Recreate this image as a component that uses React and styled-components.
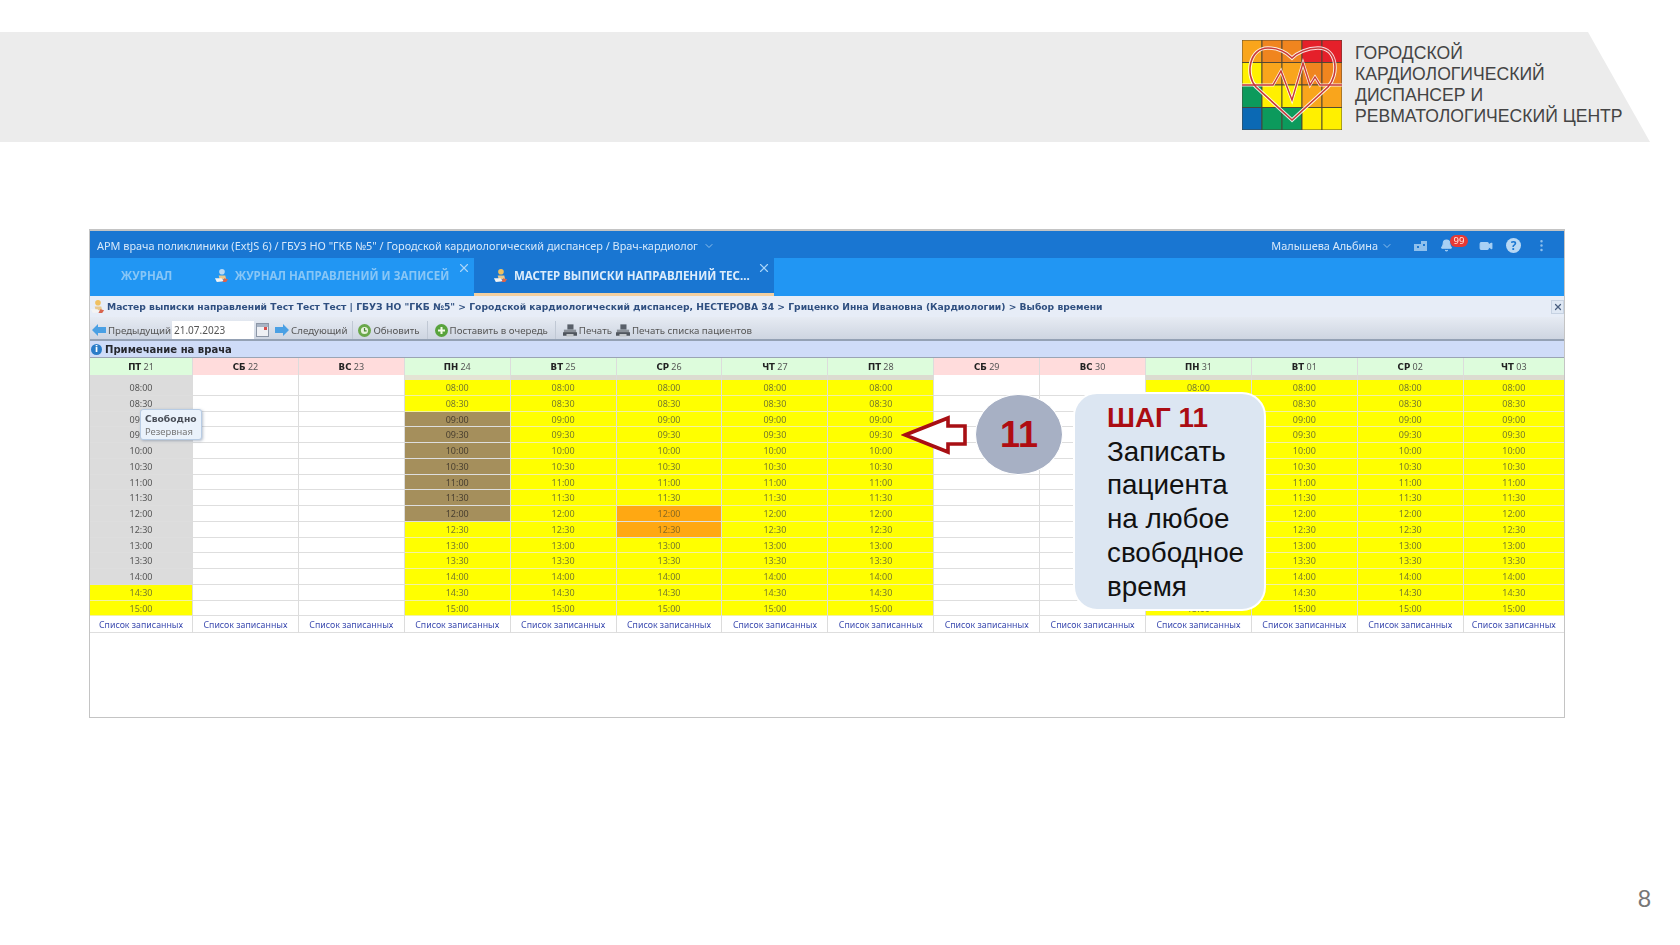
import styled, { createGlobalStyle } from "styled-components";
import { X, ChevronDown, Bell, Video, EllipsisVertical } from "lucide-react";

const GlobalStyle = createGlobalStyle`
  html, body {
    margin: 0;
    padding: 0;
    background: #fff;
  }
`;

const SLOTS = [
  "08:00", "08:30", "09:00", "09:30", "10:00", "10:30", "11:00", "11:30",
  "12:00", "12:30", "13:00", "13:30", "14:00", "14:30", "15:00",
];

const DAYS = [
  { name: "ПТ", num: "21", strip: "#dcdcdc", tone: (i) => (i < 13 ? "off" : "free") },
  { name: "СБ", num: "22", weekend: true },
  { name: "ВС", num: "23", weekend: true },
  { name: "ПН", num: "24", strip: "#e4e4d4", tone: (i) => (i >= 2 && i <= 8 ? "busy" : "free") },
  { name: "ВТ", num: "25", strip: "#dcdcd0", tone: () => "free" },
  { name: "СР", num: "26", strip: "#dcdcd0", tone: (i) => (i === 8 || i === 9 ? "queue" : "free") },
  { name: "ЧТ", num: "27", strip: "#dcdcd0", tone: () => "free" },
  { name: "ПТ", num: "28", strip: "#dcdcd0", tone: () => "free" },
  { name: "СБ", num: "29", weekend: true },
  { name: "ВС", num: "30", weekend: true },
  { name: "ПН", num: "31", strip: "#dcdcd0", tone: () => "free" },
  { name: "ВТ", num: "01", strip: "#dcdcd0", tone: () => "free" },
  { name: "СР", num: "02", strip: "#dcdcd0", tone: () => "free" },
  { name: "ЧТ", num: "03", strip: "#dcdcd0", tone: () => "free" },
];

const LOGO_COLORS = [
  ["#f9a51c", "#f0851f", "#f0851f", "#e5202a", "#e5202a"],
  ["#fff000", "#f9a51c", "#f9a51c", "#f0851f", "#f0851f"],
  ["#0c9a5c", "#fff000", "#fff000", "#f9a51c", "#f9a51c"],
  ["#0b69b4", "#0c9a5c", "#0c9a5c", "#fff000", "#fff000"],
];

function Logo() {
  const heart = "M50 80 L14 47 C3 35 7 8 26 8 C37 8 45 13 50 18 C55 13 65 8 76 8 C96 8 97 35 86 47 Z";
  const pulse = "M0 45 L31 45 L39 31 L50 60 L61 23 L68 45 L73 37 L78 45 L100 45";
  return (
    <LogoSvg viewBox="0 0 100 90">
      {LOGO_COLORS.map((row, y) =>
        row.map((color, x) => (
          <rect key={`${x}-${y}`} x={x * 20} y={y * 22.5} width="20" height="22.5" fill={color} stroke="#4a4434" strokeWidth="0.9" />
        ))
      )}
      <path d={heart} fill="none" stroke="#fff" strokeWidth="3.6" opacity="0.85" />
      <path d={pulse} fill="none" stroke="#fff" strokeWidth="3" opacity="0.85" />
      <path d={heart} fill="none" stroke="#c8383a" strokeWidth="1.6" />
      <path d={pulse} fill="none" stroke="#c8383a" strokeWidth="1.4" />
    </LogoSvg>
  );
}

function PersonIcon({ head = "#f0c060" }) {
  return (
    <svg width="15" height="15" viewBox="0 0 16 16">
      <circle cx="8.5" cy="4" r="3" fill={head} />
      <path d="M5 8 L12 8 L13 12 L6 12 Z" fill="#e9c88c" />
      <path d="M1 11 L8 11 L11 14 L3 15 Z" fill="#f4f4f4" />
      <path d="M11 11 L15 12 L13 15 L9 15 Z" fill="#d8644e" />
    </svg>
  );
}

function ArrowIcon({ left }) {
  return (
    <svg width="14" height="12" viewBox="0 0 14 12">
      <path d={left ? "M0 6 L6 0 L6 3 L14 3 L14 9 L6 9 L6 12 Z" : "M14 6 L8 0 L8 3 L0 3 L0 9 L8 9 L8 12 Z"} fill="#4aa0e4" />
    </svg>
  );
}

function RefreshIcon() {
  return (
    <svg width="13" height="13" viewBox="0 0 13 13">
      <circle cx="6.5" cy="6.5" r="6.5" fill="#6aa84a" />
      <circle cx="6.5" cy="6.5" r="3.6" fill="#e8f2dc" />
      <path d="M6.5 4 V6.8 H8.6" fill="none" stroke="#4a8a34" strokeWidth="1.2" />
    </svg>
  );
}

function AddIcon() {
  return (
    <svg width="13" height="13" viewBox="0 0 13 13">
      <circle cx="6.5" cy="6.5" r="6.5" fill="#58a33c" />
      <path d="M6.5 3 V10 M3 6.5 H10" stroke="#f4fbe8" strokeWidth="2" />
    </svg>
  );
}

function PrintIcon() {
  return (
    <svg width="14" height="13" viewBox="0 0 16 14">
      <path d="M5 0 H12 V6 H5 Z" fill="#59606a" />
      <path d="M1 6 H15 V12 H1 Z" fill="#8a9098" />
      <path d="M0 9 H16 V13 H0 Z" fill="#50565e" />
      <path d="M4 11 H12 V14 H4 Z" fill="#c4c8cc" />
    </svg>
  );
}

function CalendarIcon() {
  return (
    <svg width="13" height="14" viewBox="0 0 13 14">
      <rect x="0.5" y="0.5" width="12" height="13" fill="#eef0f4" stroke="#8c96a6" />
      <rect x="1" y="1" width="11" height="3" fill="#a8b4c4" />
      <rect x="8" y="4" width="3" height="3" fill="#d8504e" />
    </svg>
  );
}

function RedArrow() {
  return (
    <ArrowSvg width="68" height="42" viewBox="0 0 68 42">
      <path d="M4 20 L47 3 L47 11 L64 11 L64 29 L47 29 L47 37 Z" fill="#fff" stroke="#a80f14" strokeWidth="3.6" />
    </ArrowSvg>
  );
}

function DayColumn({ day }) {
  return (
    <Column>
      <DayHead $weekend={day.weekend}>
        <b>{day.name}</b> {day.num}
      </DayHead>
      <Strip $color={day.strip} />
      {SLOTS.map((slot, i) => {
        const tone = day.tone ? day.tone(i) : "empty";
        return <Slot key={slot} $tone={tone}>{day.tone ? slot : ""}</Slot>;
      })}
      <ListLink>Список записанных</ListLink>
    </Column>
  );
}

export default function App() {
  return (
    <Page>
      <GlobalStyle />
      <Band>
        <Logo />
        <Org>
          ГОРОДСКОЙ<br />
          КАРДИОЛОГИЧЕСКИЙ<br />
          ДИСПАНСЕР И<br />
          РЕВМАТОЛОГИЧЕСКИЙ ЦЕНТР
        </Org>
      </Band>

      <Window>
        <TopBar>
          <AppTitle>
            АРМ врача поликлиники (ExtJS 6) / ГБУЗ НО "ГКБ №5" / Городской кардиологический диспансер / Врач-кардиолог
            <ChevronDown size={12} />
          </AppTitle>
          <UserArea>
            <UserName>
              Малышева Альбина
              <ChevronDown size={12} />
            </UserName>
            <TopIcon $left={21}>
              <svg width="13" height="11" viewBox="0 0 13 11">
                <path d="M0 4 H7 V1 H13 V11 H0 Z" fill="#8fc0ec" />
                <rect x="3" y="6" width="2" height="2" fill="#1976d2" />
                <rect x="9" y="4" width="2" height="2" fill="#1976d2" />
              </svg>
            </TopIcon>
            <TopIcon $left={13}>
              <Bell size={13} fill="#a8d0f4" stroke="#a8d0f4" />
              <Badge>99</Badge>
            </TopIcon>
            <TopIcon $left={26}>
              <Video size={14} fill="#a8d0f4" stroke="#a8d0f4" />
            </TopIcon>
            <HelpDot>?</HelpDot>
            <TopIcon $left={13}>
              <EllipsisVertical size={15} stroke="#8fc0ec" />
            </TopIcon>
          </UserArea>
        </TopBar>

        <TabBar>
          <Tab $width={113}>ЖУРНАЛ</Tab>
          <Tab $width={271} $padRight={14}>
            <PersonIcon head="#b8d8f4" />
            ЖУРНАЛ НАПРАВЛЕНИЙ И ЗАПИСЕЙ
            <TabClose><X size={14} /></TabClose>
          </Tab>
          <Tab $width={300} $active>
            <PersonIcon />
            МАСТЕР ВЫПИСКИ НАПРАВЛЕНИЙ ТЕС...
            <TabClose><X size={14} /></TabClose>
          </Tab>
        </TabBar>

        <Crumbs>
          <PersonIcon />
          <CrumbText>
            Мастер выписки направлений Тест Тест Тест | ГБУЗ НО "ГКБ №5" &gt; Городской кардиологический диспансер, НЕСТЕРОВА 34 &gt; Гриценко Инна Ивановна (Кардиологии) &gt; Выбор времени
          </CrumbText>
          <CrumbClose><X size={10} strokeWidth={3} /></CrumbClose>
        </Crumbs>

        <Toolbar>
          <ToolButton><ArrowIcon left />Предыдущий</ToolButton>
          <DateField>21.07.2023</DateField>
          <CalendarIcon />
          <ToolButton $gap={6}><ArrowIcon />Следующий</ToolButton>
          <Divider $space={5} />
          <ToolButton><RefreshIcon />Обновить</ToolButton>
          <Divider $space={7} />
          <ToolButton><AddIcon />Поставить в очередь</ToolButton>
          <Divider $space={7} />
          <ToolButton><PrintIcon />Печать</ToolButton>
          <ToolButton $gap={4}><PrintIcon />Печать списка пациентов</ToolButton>
        </Toolbar>

        <NoteBar>
          <InfoDot>i</InfoDot>
          Примечание на врача
        </NoteBar>

        <Schedule>
          {DAYS.map((day) => (
            <DayColumn key={day.name + day.num} day={day} />
          ))}
          <Tip>
            <b>Свободно</b>
            <span>Резервная</span>
          </Tip>
        </Schedule>
      </Window>

      <RedArrow />
      <StepBadge>11</StepBadge>
      <Callout>
        <strong>ШАГ 11</strong>
        Записать<br />
        пациента<br />
        на любое<br />
        свободное<br />
        время
      </Callout>

      <PageNumber>8</PageNumber>
    </Page>
  );
}

const Page = styled.div`
  position: relative;
  width: 1680px;
  height: 945px;
  overflow: hidden;
  display: flex;
  flex-direction: column;
  background: #fff;
  font-family: "Liberation Sans", Arial, sans-serif;
`;

const Band = styled.div`
  margin-top: 32px;
  width: 1650px;
  height: 110px;
  box-sizing: border-box;
  padding: 8px 0 0 1242px;
  display: flex;
  align-items: flex-start;
  gap: 13px;
  background: #ececec;
  clip-path: polygon(0 0, 1588px 0, 100% 100%, 0 100%);
`;

const LogoSvg = styled.svg`
  width: 100px;
  height: 90px;
  flex: none;
`;

const Org = styled.div`
  margin-top: 3px;
  font-size: 17.6px;
  line-height: 21.1px;
  color: #444;
  white-space: nowrap;
`;

const Window = styled.div`
  margin: 87px 0 0 89px;
  width: 1476px;
  height: 489px;
  box-sizing: border-box;
  border: 1px solid #c4c4c4;
  border-top-width: 2px;
  background: #fff;
  font-family: "Noto Sans", sans-serif;
  filter: blur(0.4px);
`;

const TopBar = styled.div`
  height: 27px;
  box-sizing: border-box;
  padding: 2px 15px 0 7px;
  display: flex;
  align-items: center;
  justify-content: space-between;
  background: #1976d2;
`;

const AppTitle = styled.div`
  display: flex;
  align-items: center;
  gap: 5px;
  font-size: 10.9px;
  color: #d6e8fa;
  white-space: nowrap;

  svg {
    color: #8fc0ec;
  }
`;

const UserName = styled(AppTitle)`
  gap: 3px;
`;

const UserArea = styled.div`
  display: flex;
  align-items: center;
`;

const TopIcon = styled.div`
  position: relative;
  margin-left: ${(p) => p.$left}px;
  display: flex;
  align-items: center;
`;

const Badge = styled.span`
  position: absolute;
  left: 10px;
  top: -4px;
  width: 18px;
  height: 12px;
  border-radius: 6px;
  background: #e53935;
  color: #ffe9e0;
  font-size: 9.5px;
  line-height: 12px;
  text-align: center;
`;

const HelpDot = styled.span`
  margin-left: 13px;
  width: 15px;
  height: 15px;
  border-radius: 50%;
  background: #b8d8f4;
  color: #1976d2;
  font-size: 12px;
  font-weight: 700;
  line-height: 15px;
  text-align: center;
`;

const TabBar = styled.div`
  height: 38px;
  display: flex;
  background: #2196f3;
`;

const Tab = styled.div`
  position: relative;
  width: ${(p) => p.$width}px;
  box-sizing: border-box;
  display: flex;
  align-items: center;
  justify-content: ${(p) => (p.$active ? "flex-start" : "center")};
  gap: 6px;
  padding: 0 ${(p) => p.$padRight || 0}px ${(p) => (p.$active ? "0" : "3px")} ${(p) => (p.$active ? "19px" : "0")};
  font-size: 11.5px;
  font-weight: 700;
  white-space: nowrap;
  color: ${(p) => (p.$active ? "#dcecfb" : "#88c6f6")};
  background: ${(p) => (p.$active ? "#1976d2" : "transparent")};
  border-bottom: ${(p) => (p.$active ? "3px solid #f3cfa0" : "0")};
`;

const TabClose = styled.span`
  position: absolute;
  right: 3px;
  top: 3px;
  color: #a8d4f8;
`;

const Crumbs = styled.div`
  height: 21px;
  display: flex;
  align-items: center;
  gap: 2px;
  background: #e7edf7;
`;

const CrumbText = styled.div`
  flex: 1;
  font-family: "DejaVu Sans", sans-serif;
  font-size: 9.2px;
  font-weight: 700;
  color: #2f4f80;
  white-space: nowrap;
`;

const CrumbClose = styled.span`
  width: 11px;
  height: 12px;
  display: flex;
  align-items: center;
  justify-content: center;
  background: #dfe8f4;
  border: 1px solid #c6d2e2;
  color: #4a5f80;
`;

const Toolbar = styled.div`
  height: 24px;
  box-sizing: border-box;
  padding: 4px 2px 0;
  display: flex;
  align-items: center;
  background: linear-gradient(#e6ebf3, #ced5e1);
  border-bottom: 2px solid #94a1b4;
`;

const ToolButton = styled.div`
  margin-left: ${(p) => p.$gap || 0}px;
  display: flex;
  align-items: center;
  gap: 2px;
  font-size: 9.7px;
  color: #555;
  white-space: nowrap;
`;

const DateField = styled.div`
  margin: 0 2px 0 1px;
  width: 82px;
  height: 18px;
  box-sizing: border-box;
  padding-left: 2px;
  background: #fff;
  font-size: 10px;
  line-height: 18px;
  color: #555;
`;

const Divider = styled.span`
  margin: 0 ${(p) => p.$space}px;
  width: 1px;
  height: 18px;
  background: #c0c8d4;
`;

const NoteBar = styled.div`
  height: 17px;
  box-sizing: border-box;
  padding-top: 1px;
  display: flex;
  align-items: center;
  gap: 3px;
  background: #cfdcf8;
  border-bottom: 1px solid #9aa4b4;
  font-family: "DejaVu Sans", sans-serif;
  font-size: 10.05px;
  font-weight: 700;
  color: #26282e;
`;

const InfoDot = styled.span`
  margin-left: 1px;
  width: 11px;
  height: 11px;
  border-radius: 50%;
  background: #2a7cc8;
  color: #fff;
  font-size: 9px;
  line-height: 11px;
  text-align: center;
`;

const Schedule = styled.div`
  position: relative;
  display: grid;
  grid-template-columns: 103px repeat(12, 105.9px) 1fr;
`;

const Column = styled.div`
  display: flex;
  flex-direction: column;
  min-width: 0;
  border-right: 1px solid #dcdcdc;

  &:nth-of-type(14) {
    border-right: 0;
  }
`;

const DayHead = styled.div`
  height: 17px;
  background: ${(p) => (p.$weekend ? "#ffdcdc" : "#ddfcdc")};
  font-size: 9px;
  line-height: 18px;
  text-align: center;
  color: #555;

  b {
    color: #222;
    font-family: "DejaVu Sans", sans-serif;
    font-size: 8.6px;
  }
`;

const Strip = styled.div`
  height: 5px;
  background: ${(p) => p.$color || "#fff"};
`;

const SLOT_COLORS = {
  off: "#dcdcdc",
  free: "#ffff00",
  busy: "#a58f5c",
  queue: "#ffa812",
  empty: "#fff",
};

const SLOT_TEXT = {
  off: "#555",
  free: "#777a2c",
  busy: "#4a4030",
  queue: "#8a6a20",
  empty: "#555",
};

const Slot = styled.div`
  height: 15.75px;
  box-sizing: border-box;
  background: ${(p) => SLOT_COLORS[p.$tone]};
  border-bottom: 1px solid ${(p) => (p.$tone === "free" ? "#f2f2a0" : "#dedede")};
  color: ${(p) => SLOT_TEXT[p.$tone]};
  font-size: 9px;
  line-height: 15px;
  text-align: center;
`;

const ListLink = styled.div`
  height: 17px;
  box-sizing: border-box;
  border-bottom: 1px solid #dedede;
  color: #3d4cb0;
  font-size: 8.8px;
  line-height: 18px;
  text-align: center;
  white-space: nowrap;
`;

const Tip = styled.div`
  position: absolute;
  left: 50px;
  top: 51px;
  width: 62px;
  height: 31px;
  box-sizing: border-box;
  padding: 2px 4px;
  display: flex;
  flex-direction: column;
  background: #eaf2fb;
  border: 1px solid #b8cce4;
  border-radius: 3px;
  box-shadow: 1px 1px 3px rgba(90, 110, 140, 0.45);
  font-size: 9.4px;
  line-height: 13px;
  color: #777;
  white-space: nowrap;

  b {
    font-family: "DejaVu Sans", sans-serif;
    font-size: 9.2px;
    color: #4a4f58;
  }
`;

const ArrowSvg = styled.svg`
  position: absolute;
  left: 901px;
  top: 415px;
`;

const StepBadge = styled.div`
  position: absolute;
  left: 975px;
  top: 394px;
  width: 88px;
  height: 81px;
  box-sizing: border-box;
  border: 1px solid #fff;
  border-radius: 50%;
  background: #a7b0c4;
  color: #b00d12;
  font-size: 36px;
  font-weight: 700;
  line-height: 79px;
  text-align: center;
`;

const Callout = styled.div`
  position: absolute;
  left: 1073px;
  top: 392px;
  width: 193px;
  height: 219px;
  box-sizing: border-box;
  padding: 7px 0 0 32px;
  background: #dce6f2;
  border: 2px solid #fff;
  border-radius: 24px;
  color: #111;
  font-size: 27.8px;
  line-height: 33.7px;
  white-space: nowrap;

  strong {
    display: block;
    color: #ab0d12;
  }
`;

const PageNumber = styled.div`
  margin: 168px 29px 0 0;
  align-self: flex-end;
  font-size: 24px;
  line-height: 26px;
  color: #777;
`;
